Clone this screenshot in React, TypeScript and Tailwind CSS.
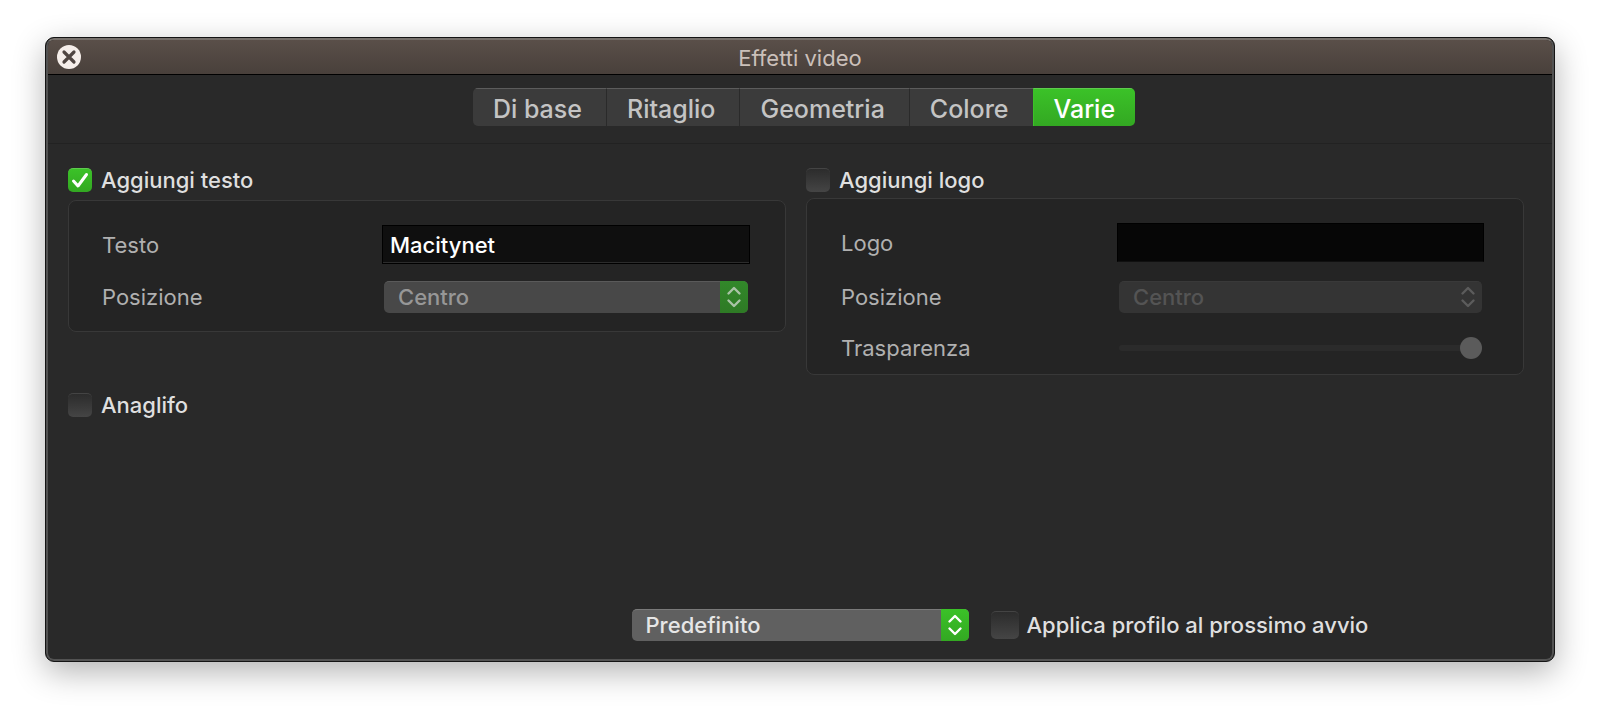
import { useState } from 'react';
import type { ReactNode } from 'react';
import clsx from 'clsx';

const TABS = ['Di base', 'Ritaglio', 'Geometria', 'Colore', 'Varie'];
const POSITIONS = ['Centro', 'Sinistra', 'Destra', 'In alto', 'In basso'];

function CheckBox({ id, label, checked, onChange, large }: {
  id: string;
  label: string;
  checked: boolean;
  onChange: (value: boolean) => void;
  large?: boolean;
}) {
  return (
    <div className={clsx('flex items-center', large ? 'gap-2' : 'gap-[9px]')}>
      <span className={clsx('relative shrink-0', large ? 'size-7' : 'size-6')}>
        <input
          id={id}
          type="checkbox"
          checked={checked}
          onChange={e => onChange(e.target.checked)}
          className="block size-full appearance-none rounded-[5px] border-t border-[#444444] bg-linear-to-b from-[#2c2c2c] to-[#454545] checked:border-[#5ecb4e] checked:from-[#3bc228] checked:to-[#33a822]"
        />
        {checked && (
          <svg viewBox="0 0 24 24" className="pointer-events-none absolute inset-0 size-full" fill="none" stroke="#fff" strokeWidth="3" strokeLinecap="round" strokeLinejoin="round">
            <path d="M5.5 13 10 18 18.5 6.5" />
          </svg>
        )}
      </span>
      <label htmlFor={id} className="text-[22px] leading-6 font-medium text-[#dfdfdf]">{label}</label>
    </div>
  );
}

function PopUp({ id, options, tone, disabled, label }: {
  id: string;
  options: string[];
  tone: 'active' | 'dimmed' | 'off';
  disabled?: boolean;
  label?: string;
}) {
  return (
    <div className="relative h-8 w-full">
      <select
        id={id}
        disabled={disabled}
        aria-label={label}
        className={clsx(
          'block h-8 w-full appearance-none rounded-[5px] border-t pr-8 pb-px pl-3.5 text-[22px] leading-7 font-medium disabled:opacity-100',
          tone === 'active' && 'border-[#7a7a7a] bg-[#606060] text-[#e6e6e6]',
          tone === 'dimmed' && 'border-[#5a5a5a] bg-[#484848] text-[#979797]',
          tone === 'off' && 'border-[#393939] bg-[#343434] text-[#545454]'
        )}
      >
        {options.map(o => (
          <option key={o}>{o}</option>
        ))}
      </select>
      <span
        className={clsx(
          'pointer-events-none absolute inset-y-0 right-0 flex w-7 items-center justify-center rounded-r-[5px]',
          tone === 'active' && 'bg-linear-to-b from-[#3bc228] to-[#33a822] text-white',
          tone === 'dimmed' && 'bg-linear-to-b from-[#32882a] to-[#2e7a25] text-[#a9c3a6]',
          tone === 'off' && 'text-[#5c5c5c]'
        )}
      >
        <svg width="16" height="22" viewBox="0 0 16 22" fill="none" stroke="currentColor" strokeWidth="2.4" strokeLinecap="round" strokeLinejoin="round">
          <path d="M2.5 7.5 8 2 13.5 7.5M2.5 14.5 8 20 13.5 14.5" />
        </svg>
      </span>
    </div>
  );
}

function Row({ id, label, labelWidth, children }: {
  id: string;
  label: string;
  labelWidth: string;
  children: ReactNode;
}) {
  return (
    <div className="flex items-center">
      <label htmlFor={id} className={clsx('shrink-0 text-[22px] leading-6 text-[#b0b0b0]', labelWidth)}>{label}</label>
      <div className="min-w-0 flex-1">{children}</div>
    </div>
  );
}

export default function App() {
  const [tab, setTab] = useState('Varie');
  const [addText, setAddText] = useState(true);
  const [addLogo, setAddLogo] = useState(false);
  const [anaglyph, setAnaglyph] = useState(false);
  const [applyNext, setApplyNext] = useState(false);
  const [text, setText] = useState('Macitynet');

  return (
    <div className="min-h-screen bg-white px-[45px] pt-[37px] pb-[53px] font-['Inter','Liberation_Sans',sans-serif]">
      <div className="overflow-hidden rounded-[9px] border border-[#141414] bg-[#141414] shadow-[0_10px_32px_rgba(0,0,0,0.3)]">
        <div className="overflow-hidden rounded-lg border-2 border-[#525252] border-t-[#77716c] bg-[#292929]">
          {/* Title bar */}
          <header className="grid h-[35px] grid-cols-[1fr_auto_1fr] items-center border-b border-black bg-linear-to-b from-[#5a4f49] to-[#49403b] px-[9px]">
            <button type="button" aria-label="Chiudi" className="size-6 rounded-full bg-[#f5eeea]">
              <svg viewBox="0 0 24 24" className="size-6" fill="none" stroke="#4f4541" strokeWidth="3.2" strokeLinecap="round">
                <path d="M7 7 17 17M17 7 7 17" />
              </svg>
            </button>
            <h1 className="pt-0.5 text-[22px] leading-8 text-[#cbc0ba]">Effetti video</h1>
          </header>

          {/* Tabs */}
          <nav className="flex h-[69px] justify-center border-b border-[#222222] pt-[13px] pl-2">
            <div role="tablist" className="flex h-[38px] overflow-hidden rounded-[5px]">
              {TABS.map(t => (
                <button
                  key={t}
                  type="button"
                  role="tab"
                  aria-selected={t === tab}
                  onClick={() => setTab(t)}
                  className={clsx(
                    'border-t border-l pt-0.5 pr-6 pl-5 text-[25px] leading-9 font-medium first:border-l-0 last:pr-5',
                    t === tab
                      ? 'border-t-[#5ecb4e] border-l-[#3bc228] bg-linear-to-b from-[#3bc228] to-[#33a822] text-white'
                      : 'border-t-[#5c5c5c] border-l-[#2a2a2a] bg-[#3b3b3b] text-[#c4c4c4]'
                  )}
                >
                  {t}
                </button>
              ))}
            </div>
          </nav>

          <main className="pt-6 pr-7 pl-5">
            <div className="grid grid-cols-2 items-start gap-5">
              <section>
                <CheckBox id="add-text" label="Aggiungi testo" checked={addText} onChange={setAddText} />
                <div className="mt-2 flex flex-col gap-[17px] rounded-lg border border-[#383838] bg-[#242424] pt-6 pr-[35px] pb-[18px] pl-[33px]">
                  <Row id="text" label="Testo" labelWidth="w-[280px]">
                    <input
                      id="text"
                      type="text"
                      value={text}
                      onChange={e => setText(e.target.value)}
                      className="block h-[39px] w-full border border-black bg-[#0f0f0f] px-[7px] text-[22px] font-medium text-white shadow-[inset_0_-1px_0_#2c2c2c] outline-none"
                    />
                  </Row>
                  <Row id="text-position" label="Posizione" labelWidth="w-[280px]">
                    <div className="px-0.5">
                      <PopUp id="text-position" options={POSITIONS} tone="dimmed" />
                    </div>
                  </Row>
                </div>
              </section>

              <section>
                <CheckBox id="add-logo" label="Aggiungi logo" checked={addLogo} onChange={setAddLogo} />
                <div className="mt-1.5 rounded-lg border border-[#383838] bg-[#242424] pt-6 pr-[39px] pb-3.5 pl-[34px]">
                  <Row id="logo" label="Logo" labelWidth="w-[276px]">
                    <input
                      id="logo"
                      type="text"
                      disabled
                      className="block h-[39px] w-full border border-black border-b-[#101010] bg-[#060606] px-[7px] text-[22px] text-white"
                    />
                  </Row>
                  <div className="mt-[19px]">
                    <Row id="logo-position" label="Posizione" labelWidth="w-[276px]">
                      <div className="px-0.5">
                        <PopUp id="logo-position" options={POSITIONS} tone="off" disabled />
                      </div>
                    </Row>
                  </div>
                  <div className="mt-[23px]">
                    <Row id="opacity" label="Trasparenza" labelWidth="w-[276px]">
                      <div className="px-0.5">
                        <input
                          id="opacity"
                          type="range"
                          min="0"
                          max="255"
                          defaultValue="255"
                          disabled
                          className="block h-6 w-full appearance-none bg-transparent [&::-webkit-slider-runnable-track]:h-1.5 [&::-webkit-slider-runnable-track]:rounded-full [&::-webkit-slider-runnable-track]:bg-[#2b2b2b] [&::-webkit-slider-thumb]:-mt-2 [&::-webkit-slider-thumb]:size-[22px] [&::-webkit-slider-thumb]:appearance-none [&::-webkit-slider-thumb]:rounded-full [&::-webkit-slider-thumb]:bg-[#5b5b5b]"
                        />
                      </div>
                    </Row>
                  </div>
                </div>
              </section>
            </div>

            <div className="mt-[18px]">
              <CheckBox id="anaglyph" label="Anaglifo" checked={anaglyph} onChange={setAnaglyph} />
            </div>
          </main>

          <footer className="mt-48 grid grid-cols-[1fr_337px_1fr] items-center gap-[22px] pb-[18px]">
            <div className="col-start-2">
              <PopUp id="profile" label="Profilo" options={['Predefinito']} tone="active" />
            </div>
            <CheckBox id="apply-next" label="Applica profilo al prossimo avvio" checked={applyNext} onChange={setApplyNext} large />
          </footer>
        </div>
      </div>
    </div>
  );
}
